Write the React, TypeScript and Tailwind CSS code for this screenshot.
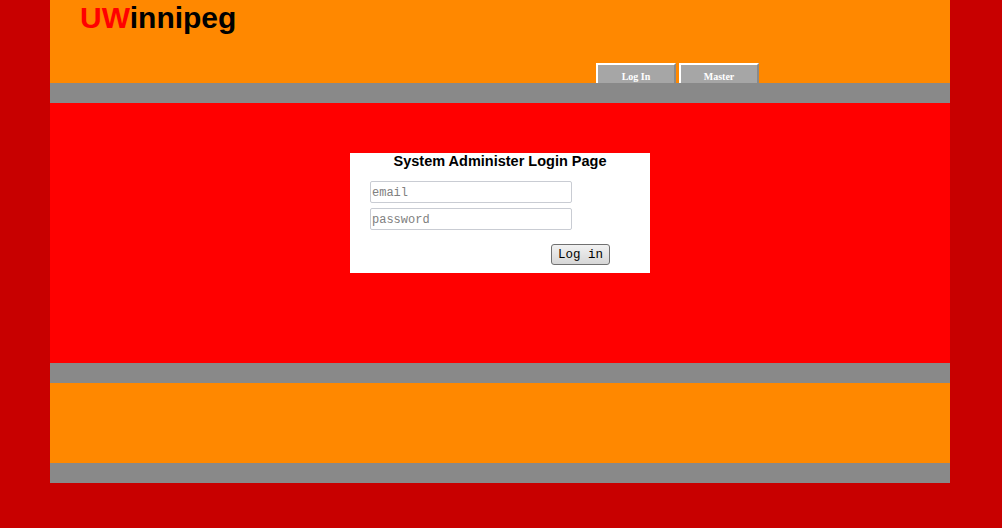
export default function App() {
  return (
    <div className="h-[528px] w-full bg-[#c80000] font-['Liberation_Sans',Arial,sans-serif]">
      <div className="ml-[50px] w-[900px]">
        {/* Header */}
        <div className="flex h-[83px] flex-col justify-between bg-[#ff8800]">
          <h1 className="pl-[30px] pt-[3px] text-[30px] font-bold leading-[30px] text-black">
            <span className="text-[#ff0000]">UW</span>innipeg
          </h1>
          <nav className="flex gap-[3px] pl-[546px]">
            {["Log In", "Master"].map((label) => (
              <button
                key={label}
                className="h-[20px] w-[80px] border-2 border-b-0 border-t-white border-l-white border-r-[#8a8a8a] bg-[#a6a6a6] pt-[5px] font-['Liberation_Serif',serif] text-[10px] font-bold leading-none text-white"
              >
                {label}
              </button>
            ))}
          </nav>
        </div>
        <div className="h-[20px] bg-[#898989]" />

        {/* Main */}
        <div className="flex h-[260px] justify-center bg-[#ff0000] pt-[50px]">
          <div className="h-[120px] w-[300px] bg-white">
            <h2 className="text-center text-[14.5px] font-bold leading-[17px] text-black">
              System Administer Login Page
            </h2>
            <form className="flex flex-col px-[20px] pt-[11px]">
              <input
                type="text"
                placeholder="email"
                className="h-[22px] w-[202px] rounded-[2px] border border-[#c9ccd3] px-[1px] pt-[2px] font-['Liberation_Mono',monospace] text-[12px] text-black placeholder-[#808080] outline-none"
              />
              <input
                type="password"
                placeholder="password"
                className="mt-[5px] h-[22px] w-[202px] rounded-[2px] border border-[#c9ccd3] px-[1px] pt-[2px] font-['Liberation_Mono',monospace] text-[12px] text-black placeholder-[#808080] outline-none"
              />
              <div className="flex justify-end pr-[20px] pt-[14px]">
                <button
                  type="button"
                  className="h-[21px] w-[59px] rounded-[3px] border border-[#707070] bg-gradient-to-b from-[#f2f2f2] to-[#d6d6d6] pt-[2px] font-['Liberation_Mono',monospace] text-[12.5px] leading-none text-black"
                >
                  Log in
                </button>
              </div>
            </form>
          </div>
        </div>
        <div className="h-[20px] bg-[#898989]" />

        {/* Footer */}
        <div className="h-[80px] bg-[#ff8800]" />
        <div className="h-[20px] bg-[#898989]" />
      </div>
    </div>
  );
}
